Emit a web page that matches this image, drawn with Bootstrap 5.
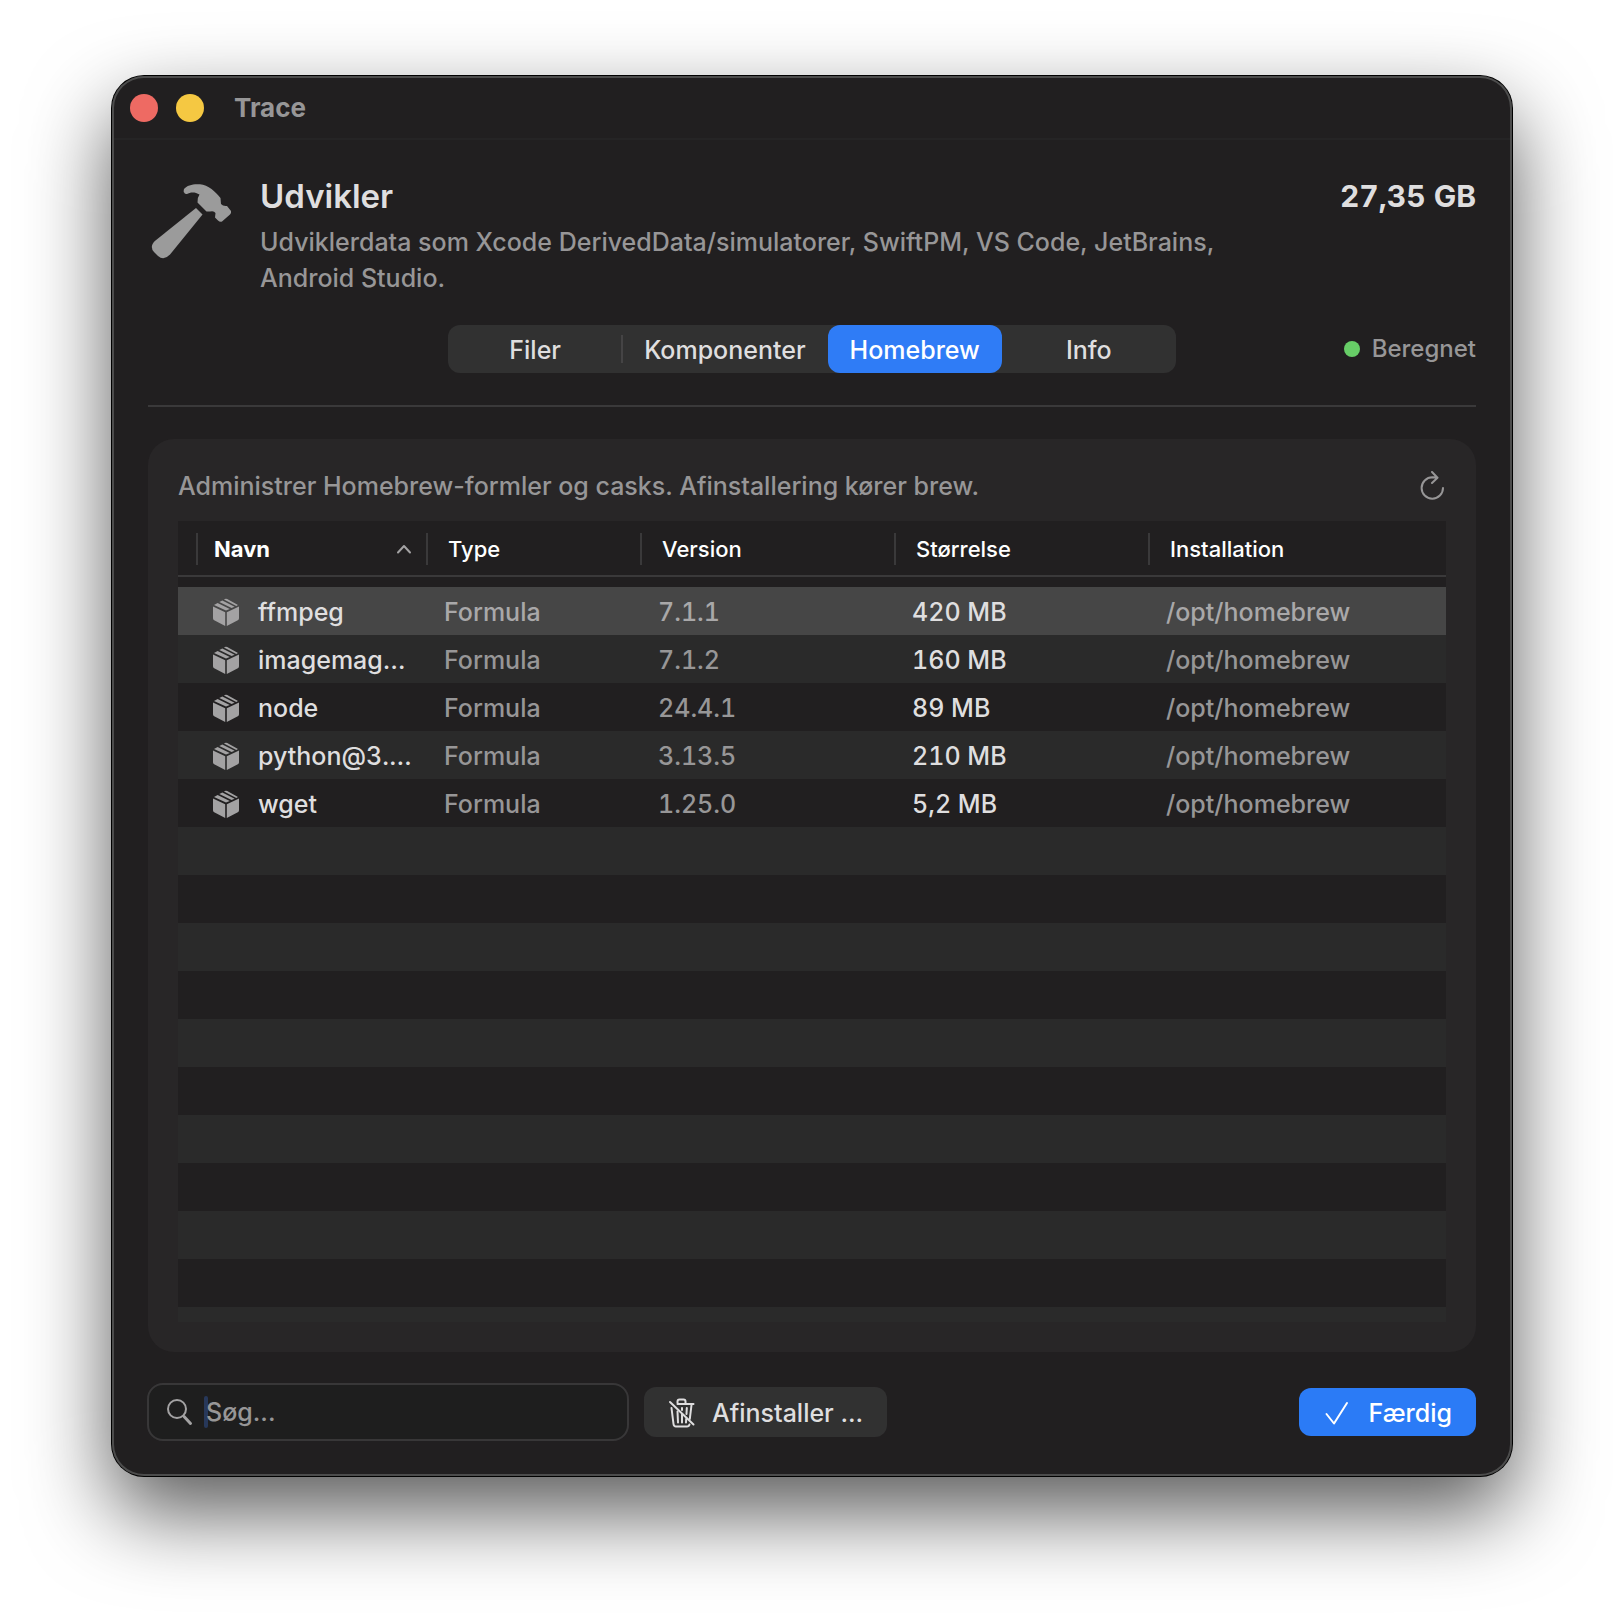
<!DOCTYPE html>
<html lang="da" data-bs-theme="dark">
<head>
<meta charset="utf-8">
<meta name="viewport" content="width=device-width, initial-scale=1">
<title>Trace</title>
<link href="https://cdn.jsdelivr.net/npm/bootstrap@5.3.0/dist/css/bootstrap.min.css" rel="stylesheet">
<style>
  body {
    --win: #211f20;
    --stripe: #2a2a2a;
    --muted: #979697;
    --bright: #dfdedf;
    --line: #3a393a;
    --accent: #2f7cf6;
    --ctl: #313131;
    background: #fff;
    color: var(--bright);
    font-family: Inter, "Liberation Sans", sans-serif;
    font-size: 25px;
    font-weight: 500;
    line-height: 36px;
    padding: 76px 112px 148px;
  }
  .app-window {
    background: var(--win);
    border-radius: 32px;
    box-shadow: inset 0 0 0 2px #4c4c4c, 0 0 0 1px #000, 0 36px 84px rgba(0,0,0,.66);
  }
  .titlebar { height: 64px; padding: 2px 18px 0; border-bottom: 2px solid #252425; margin: 0 2px; padding-left: 16px; gap: 18px; }
  .light { width: 28px; height: 28px; border: 0; padding: 0; border-radius: 50%; }
  .light-close { background: #ee6a63; }
  .light-min { background: #f5c842; }
  .app-name { color: var(--muted); font-size: 26px; font-weight: 700; padding-left: 12px; }
  .content { padding: 36px 36px 35px; }
  .text-soft { color: var(--muted); }
  .intro { gap: 28px; margin-bottom: 29px; }
  .intro-icon { width: 84px; }
  .intro-text { max-width: 980px; }
  .intro h1 { font-size: 33px; line-height: 40px; font-weight: 600; color: var(--bright); margin-bottom: 8px; }
  .total { font-size: 30px; line-height: 40px; font-weight: 700; font-variant-numeric: tabular-nums; }
  .tabs-row { display: grid; grid-template-columns: 1fr auto 1fr; padding-bottom: 32px; border-bottom: 2px solid var(--line); margin-bottom: 32px; }
  .segments { background: var(--ctl); border-radius: 12px; }
  .segments label { height: 48px; line-height: 50px; min-width: 174px; padding: 0 22px; text-align: center; border-radius: 12px; cursor: pointer; }
  .segments .btn-check:checked + label { background: var(--accent); color: #fff; }
  .segments .rule { width: 2px; height: 28px; background: #454445; margin: 0 -1px; }
  .status { font-size: 24px; gap: 12px; }
  .status-dot { width: 16px; height: 16px; background: #67cd67; }
  .panel { background: #282627; border-radius: 26px; padding: 28px 30px 30px; }
  .panel-head { margin-bottom: 16px; height: 38px; }
  .plain-btn { background: none; border: 0; padding: 0; line-height: 0; color: var(--muted); }
  .list-area { background: var(--win); }
  .pkg { --bs-table-bg: transparent; table-layout: fixed; margin: 0; font-variant-numeric: tabular-nums; }
  .pkg > thead > tr > th { font-size: 22px; font-weight: 500; color: #fff; padding: 12px 0 10px; border-bottom: 2px solid var(--line); }
  .head-cell { height: 32px; border-left: 2px solid var(--line); padding-left: 20px; }
  .pkg th:first-child .head-cell { margin-left: 18px; padding: 0 14px 0 16px; font-weight: 700; }
  .pkg > tbody::before { content: ""; display: table-row; height: 11px; }
  .pkg > tbody > tr { height: 48px; }
  .pkg > tbody > tr > td { padding: 2px 0 0 18px; border: 0; height: 48px; color: var(--muted); vertical-align: middle; white-space: nowrap; }
  .pkg > tbody > tr:nth-child(even) { background: var(--stripe); }
  .pkg > tbody > tr.picked { background: #464646; }
  .pkg > tbody > tr.picked > td { color: #a9a8a9; }
  .pkg > tbody > tr > td.strong { color: var(--bright); }
  .pkg > tbody > tr > td:first-child { padding-left: 34px; }
  .pkg-name { gap: 18px; }
  .pkg-name svg { color: #a3a2a3; }
  .c-name { width: 248px; } .c-type { width: 214px; } .c-mid { width: 254px; }
  .filler { background: repeating-linear-gradient(var(--stripe) 0 48px, var(--win) 48px 96px); }
  .footer-row { margin-top: 31px; gap: 15px; }
  .search { width: 482px; height: 58px; margin-left: -1px; border: 2px solid #383738; border-radius: 16px; background: #1e1e1e; padding-left: 18px; }
  .search-caret { width: 4px; height: 32px; background: #27385a; margin: 0 -2px 0 11px; border-radius: 2px; }
  .search input { background: none; border: 0; outline: 0; padding: 0; color: var(--bright); font-weight: 500; }
  .search input::placeholder { color: var(--muted); opacity: 1; }
  .act { border: 0; border-radius: 12px; font-size: 25px; font-weight: 500; line-height: 36px; padding: 2px 24px 0; height: 50px; color: var(--bright); background: var(--ctl); gap: 16px; }
  .act-main { height: 48px; background: #2b7bf6; color: #fff; gap: 20px; }
</style>
</head>
<body class="min-vh-100 d-flex flex-column">

<svg class="d-none" aria-hidden="true">
  <symbol id="box" viewBox="0 0 26 28">
    <path fill="currentColor" d="M0 8.600 12.200 14.200V28L1.200 22.300Q0 21.600 0 20.200ZM26 8.600 13.800 14.200V28L24.800 22.300Q26 21.600 26 20.200ZM1 7 4.600 5 16.800 11 13 12.600ZM6.300 4.100 9.300 2.500 21.600 8.700 18.600 10.100ZM11 1.600 11.800 1.100Q13 .5 14.200 1.100L25 7 23.300 7.900Z"/>
  </symbol>
</svg>

<div class="app-window d-flex flex-column flex-grow-1">
  <header class="titlebar d-flex align-items-center">
    <button class="light light-close" type="button" aria-label="Luk"></button>
    <button class="light light-min" type="button" aria-label="Minimer"></button>
    <span class="app-name">Trace</span>
  </header>

  <main class="content d-flex flex-column flex-grow-1">
    <section class="intro d-flex align-items-start">
      <svg class="intro-icon flex-shrink-0" height="84" viewBox="0 0 84 84" fill="#9b9b9b" aria-hidden="true">
        <path d="M48 32 54.500 38.500 22 78.500Q16 85 10 80L6 76Q1 70 7.500 64.500Z"/>
        <path d="M37 16Q35 17.500 36 13C39 9 46 7.600 52 8.300C60 9 68 16 72.500 22L73 28Q75 30.500 79 30L83 35Q83.500 37 82 38.500L74 45.500Q72 46.500 70 44.500L67 41.500 67.500 37Q66 34.500 62 35.500L58.500 35.500 49.500 26.500Q49 22 51.500 18.500C47 15.500 42 16 39 18Q36 18.500 36 15Z"/>
      </svg>
      <div class="intro-text flex-grow-1">
        <h1>Udvikler</h1>
        <p class="text-soft mb-0">Udviklerdata som Xcode DerivedData/simulatorer, SwiftPM, VS Code, JetBrains, Android Studio.</p>
      </div>
      <div class="total ms-auto text-nowrap">27,35 GB</div>
    </section>

    <div class="tabs-row align-items-center">
      <span></span>
      <div class="segments d-flex align-items-center" role="group" aria-label="Visning">
        <input class="btn-check" type="radio" name="view" id="v-files"><label for="v-files">Filer</label>
        <span class="rule"></span>
        <input class="btn-check" type="radio" name="view" id="v-comp"><label for="v-comp">Komponenter</label>
        <input class="btn-check" type="radio" name="view" id="v-brew" checked><label for="v-brew">Homebrew</label>
        <input class="btn-check" type="radio" name="view" id="v-info"><label for="v-info">Info</label>
      </div>
      <div class="status text-soft d-flex align-items-center justify-content-end">
        <span class="status-dot rounded-circle"></span>Beregnet
      </div>
    </div>

    <section class="panel d-flex flex-column flex-grow-1">
      <div class="panel-head d-flex align-items-center justify-content-between text-soft">
        <span>Administrer Homebrew-formler og casks. Afinstallering kører brew.</span>
        <button class="plain-btn" type="button" aria-label="Opdater">
          <svg width="28" height="30" viewBox="0 0 28 30" fill="none" stroke="currentColor" stroke-width="2" stroke-linecap="round" stroke-linejoin="round"><path d="M25 17A10.700 10.700 0 1 1 14.300 6.300L19 6.600M14 1 19.500 6.800 14 12"/></svg>
        </button>
      </div>
      <div class="list-area d-flex flex-column flex-grow-1">
        <table class="table pkg">
          <colgroup><col class="c-name"><col class="c-type"><col class="c-mid"><col class="c-mid"><col></colgroup>
          <thead>
            <tr>
              <th scope="col"><div class="head-cell d-flex align-items-center justify-content-between">Navn
                <svg width="16" height="10" viewBox="0 0 16 10" fill="none" stroke="#a3a2a3" stroke-width="2" stroke-linecap="round" stroke-linejoin="round" aria-hidden="true"><path d="M2 8.500 8 2 14 8.500"/></svg></div></th>
              <th scope="col"><div class="head-cell d-flex align-items-center">Type</div></th>
              <th scope="col"><div class="head-cell d-flex align-items-center">Version</div></th>
              <th scope="col"><div class="head-cell d-flex align-items-center">Størrelse</div></th>
              <th scope="col"><div class="head-cell d-flex align-items-center">Installation</div></th>
            </tr>
          </thead>
          <tbody>
            <tr class="picked"><td class="strong"><div class="pkg-name d-flex align-items-center"><svg width="28" height="28"><use href="#box"/></svg>ffmpeg</div></td><td>Formula</td><td>7.1.1</td><td class="strong">420 MB</td><td>/opt/homebrew</td></tr>
            <tr><td class="strong"><div class="pkg-name d-flex align-items-center"><svg width="28" height="28"><use href="#box"/></svg>imagemag…</div></td><td>Formula</td><td>7.1.2</td><td class="strong">160 MB</td><td>/opt/homebrew</td></tr>
            <tr><td class="strong"><div class="pkg-name d-flex align-items-center"><svg width="28" height="28"><use href="#box"/></svg>node</div></td><td>Formula</td><td>24.4.1</td><td class="strong">89 MB</td><td>/opt/homebrew</td></tr>
            <tr><td class="strong"><div class="pkg-name d-flex align-items-center"><svg width="28" height="28"><use href="#box"/></svg>python@3.…</div></td><td>Formula</td><td>3.13.5</td><td class="strong">210 MB</td><td>/opt/homebrew</td></tr>
            <tr><td class="strong"><div class="pkg-name d-flex align-items-center"><svg width="28" height="28"><use href="#box"/></svg>wget</div></td><td>Formula</td><td>1.25.0</td><td class="strong">5,2 MB</td><td>/opt/homebrew</td></tr>
          </tbody>
        </table>
        <div class="filler flex-grow-1"></div>
      </div>
    </section>

    <footer class="footer-row d-flex align-items-center">
      <div class="search d-flex align-items-center">
        <label for="q" class="d-flex" aria-label="Søg">
          <svg width="26" height="28" viewBox="0 0 26 28" fill="none" stroke="#a3a2a3" stroke-width="2" stroke-linecap="round" aria-hidden="true"><circle cx="10" cy="11" r="9"/><path stroke-width="3" d="M17 18.500 23.500 25.500"/></svg>
        </label>
        <span class="search-caret"></span>
        <input id="q" class="flex-grow-1" type="text" placeholder="Søg...">
      </div>
      <button class="act d-flex align-items-center" type="button">
        <svg width="28" height="32" viewBox="0 0 28 32" fill="none" stroke="currentColor" stroke-width="2" stroke-linecap="round" stroke-linejoin="round" aria-hidden="true">
          <path d="M3.500 11 5.500 27Q5.800 29.500 8 29.500H19Q21 29.500 21.500 27.500M23.500 8 21.800 22M9.500 7H25.500M9.500 6V4.500Q9.500 2.500 11.500 2.500H15.500Q17.500 2.500 17.500 4.500V7M9.500 14.500 10 25.500M14 17.500V25.500M18.200 22 18 25.500M18.800 11 18.500 17M14 11V13"/>
          <path d="M2 5 25.500 27.500"/>
        </svg>
        Afinstaller ...
      </button>
      <button class="act act-main ms-auto d-flex align-items-center" type="button">
        <svg width="26" height="26" viewBox="0 0 26 26" fill="none" stroke="currentColor" stroke-width="2" stroke-linecap="round" stroke-linejoin="round" aria-hidden="true"><path d="M3.500 14 11 23.500 24 3"/></svg>
        Færdig
      </button>
    </footer>
  </main>
</div>

<script src="https://cdn.jsdelivr.net/npm/bootstrap@5.3.0/dist/js/bootstrap.bundle.min.js"></script>
</body>
</html>
